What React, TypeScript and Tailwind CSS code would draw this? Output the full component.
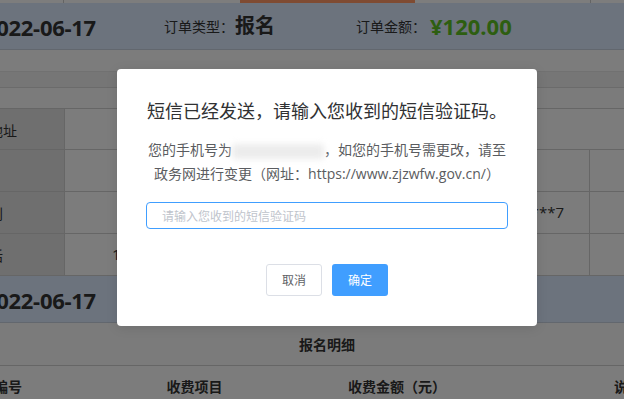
export default function App() {
  const headerBar = (
    <div className="flex items-center h-[47px] bg-[#d8e6fa] border-b border-[#c4cfdd]">
      <div className="w-[264px] shrink-0 pl-[84px] pt-[2px] text-[22px] font-bold text-[#333] tracking-[-0.3px]">2022-06-17</div>
      <div className="w-[192px] shrink-0 flex items-center">
        <span className="text-[14px] text-[#333]">订单类型：</span>
        <span className="ml-[1px] text-[20px] font-bold text-[#333]">报名</span>
      </div>
      <div className="flex items-center">
        <span className="text-[14px] text-[#333]">订单金额：</span>
        <span className="ml-[4px] text-[22px] font-bold text-[#5bbd23]">¥120.00</span>
      </div>
    </div>
  )

  const rows = [
    { label: '现居住地址', left: '', right: '', full: true },
    { label: '邮编', left: '', right: '' },
    { label: '性　别', left: '', right: '3301**********7' },
    { label: '电　话', left: '138****5678', right: '' },
  ]

  return (
    <div className="relative w-[624px] h-[399px] overflow-hidden bg-[#f6f6f6] font-['Open_Sans','Noto_Sans_CJK_SC',sans-serif] text-[#333]">
      {/* page, scrolled a little to the right */}
      <div className="ml-[-100px] w-[854px]">
        {/* tabs strip */}
        <div className="flex h-[3px] bg-[#fafafa]">
          <div className="w-[164px] border-r border-[#c8c8c8]" />
          <div className="w-[176px]" />
          <div className="w-[175px] bg-[#ff9664]" />
          <div className="w-[176px] border-r border-[#c8c8c8]" />
        </div>

        {headerBar}

        <div className="h-[22px] border-b border-[#e2e2e2] bg-[#f8f8f8]" />
        <div className="h-[16px] border-b border-[#d6d6d6] bg-[#ececec]" />
        <div className="h-[21px] border-b border-[#cccccc] bg-[#f6f6f6]" />

        {/* info table */}
        <div>
          {rows.map((r, i) => (
            <div key={i} className={`flex border-b border-[#cccccc] ${i === 0 ? 'h-[41px]' : 'h-[42px]'}`}>
              <div className="w-[165px] shrink-0 flex items-center justify-center bg-[#dedede] border-r border-[#cccccc] text-[14px] pt-[2px]">
                {r.label}
              </div>
              {r.full ? (
                <div className="flex-1 bg-[#f8f8f8]" />
              ) : (
                <>
                  <div className="w-[525px] shrink-0 flex items-center justify-between bg-[#f8f8f8] border-r border-[#cccccc] pl-[47px] pr-[25px] text-[15px]">
                    <span>{r.left}</span>
                    <span>{r.right}</span>
                  </div>
                  <div className="flex-1 bg-[#f8f8f8]" />
                </>
              )}
            </div>
          ))}
        </div>

        {headerBar}

        <div className="h-[43px] flex items-center justify-center border-b border-[#cccccc] text-[14px] font-bold">
          报名明细
        </div>

        <div className="h-[40px] flex items-center bg-[#f9f9f9] text-[14px] font-bold">
          <div className="w-[188px] shrink-0 text-center">订单编号</div>
          <div className="w-[213px] shrink-0 text-center">收费项目</div>
          <div className="w-[192px] shrink-0 text-center">收费金额（元）</div>
          <div className="w-[270px] shrink-0 text-center">说明</div>
        </div>
      </div>

      {/* mask */}
      <div className="absolute inset-0 bg-black/50" />

      {/* dialog */}
      <div className="absolute left-[117px] top-[69px] w-[420px] h-[257px] rounded-[4px] bg-white shadow-[0_2px_12px_rgba(0,0,0,0.1)] flex flex-col items-center font-['Noto_Sans_CJK_SC',sans-serif]">
        <h2 className="mt-[29px] text-[18px] leading-[24px] text-[#303133]">
          短信已经发送，请输入您收到的短信验证码。
        </h2>
        <p className="mt-[16px] text-[14px] leading-[24px] text-[#5a5c60] text-center font-['Open_Sans','Noto_Sans_CJK_SC',sans-serif]">
          您的手机号为
          <span className="inline-block w-[92px] h-[15px] align-middle bg-[#ececec] blur-[3px] rounded-[3px]" />
          ，如您的手机号需更改，请至
          <br />
          政务网进行变更（网址：https://www.zjzwfw.gov.cn/）
        </p>
        <input
          className="mt-[16px] w-[362px] h-[27px] rounded-[4px] border border-[#409eff] px-[15px] text-[12px] text-[#606266] placeholder:text-[#c0c4cc] outline-none"
          placeholder="请输入您收到的短信验证码"
        />
        <div className="mt-[35px] flex gap-[10px]">
          <button className="w-[56px] h-[32px] rounded-[3px] border border-[#dcdfe6] bg-white text-[12px] text-[#606266]">
            取消
          </button>
          <button className="w-[56px] h-[32px] rounded-[3px] bg-[#409eff] text-[12px] text-white">
            确定
          </button>
        </div>
      </div>
    </div>
  )
}
